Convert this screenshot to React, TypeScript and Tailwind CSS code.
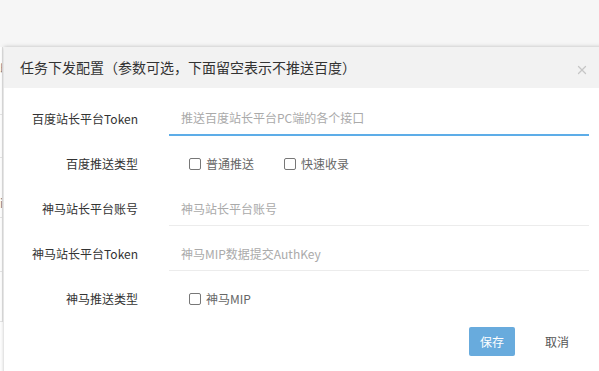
import React from 'react';
import { X } from 'lucide-react';

const font = { fontFamily: '"Noto Sans CJK SC", "Noto Sans", sans-serif' };

const Check = ({ label }: { label: string }) => (
    <label className="flex items-center mr-[19px]">
        <span className="w-[12px] h-[12px] border border-[#777] rounded-[2px] bg-white" />
        <span className="ml-[5px] text-[12px] text-[#666]">{label}</span>
    </label>
);

const Row = ({ label, children }: { label: string; children: React.ReactNode }) => (
    <div className="flex items-center h-[34px] mb-[11px]">
        <div className="w-[134px] text-right text-[12px] text-[#333]">{label}</div>
        {children}
    </div>
);

const Field = ({ placeholder, active }: { placeholder: string; active?: boolean }) => (
    <div
        className={`ml-[31px] w-[420px] h-[34px] flex items-center pl-[12px] text-[12px] text-[#aaa] ${active ? 'border-b-2 border-[#5dade8]' : 'border-b border-[#ececec]'}`}
    >
        {placeholder}
    </div>
);

export default function App() {
    return (
        <div className="relative w-[599px] h-[371px] overflow-hidden bg-white" style={font}>
            {/* page behind the dialog */}
            <div className="h-[47px] bg-[#f6f6f6]" />
            <div className="border-r border-[#e2e2e2] w-[3px] overflow-hidden">
                <div className="h-[68px] border-b border-[#e6e6e6] text-[12px] text-[#888] leading-[16px] pt-[13px]">印</div>
                <div className="h-[43px] border-b border-[#e6e6e6]" />
                <div className="h-[60px] border-b border-[#e6e6e6] text-[12px] text-[#888] leading-[16px] pt-[37px]">ii</div>
                <div className="h-[54px] border-b border-[#e6e6e6]" />
                <div className="h-[50px] border-b border-[#e6e6e6]" />
            </div>

            {/* dialog */}
            <div className="absolute left-[4px] top-[47px] w-[640px] h-[340px] bg-white shadow-[0_0_4px_rgba(0,0,0,0.25)]">
                <div className="h-[41px] bg-[#f2f2f2] flex items-center px-[16px] relative">
                    <span className="text-[14px] text-[#333]">任务下发配置（参数可选，下面留空表示不推送百度）</span>
                    <X className="absolute left-[571px] top-[16px] text-[#c6c6c6]" size={14} strokeWidth={2.2} />
                </div>
                <div className="pt-[14px]">
                    <Row label="百度站长平台Token">
                        <Field placeholder="推送百度站长平台PC端的各个接口" active />
                    </Row>
                    <Row label="百度推送类型">
                        <div className="ml-[51px] flex items-center">
                            <Check label="普通推送" />
                            <div className="ml-[11px]"><Check label="快速收录" /></div>
                        </div>
                    </Row>
                    <Row label="神马站长平台账号">
                        <Field placeholder="神马站长平台账号" />
                    </Row>
                    <Row label="神马站长平台Token">
                        <Field placeholder="神马MIP数据提交AuthKey" />
                    </Row>
                    <Row label="神马推送类型">
                        <div className="ml-[51px] flex items-center">
                            <Check label="神马MIP" />
                        </div>
                    </Row>
                    <div className="flex items-center pl-[465px] mt-[1px]">
                        <button className="w-[46px] h-[29px] rounded-[2px] bg-[#68abdd] text-white text-[12px]">保存</button>
                        <button className="ml-[19px] w-[46px] h-[29px] text-[#555] text-[12px]">取消</button>
                    </div>
                </div>
            </div>
        </div>
    );
}
